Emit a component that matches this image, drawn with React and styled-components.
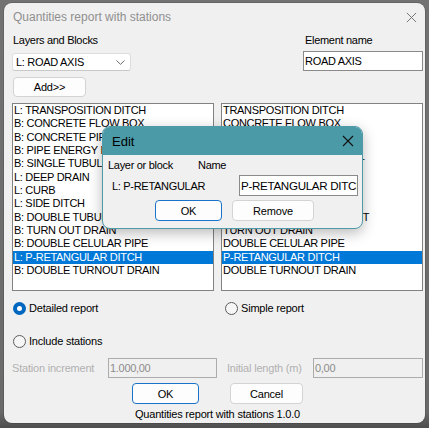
import React from 'react';
import styled, { createGlobalStyle } from 'styled-components';

const Global = createGlobalStyle`
  html, body { margin: 0; padding: 0; width: 429px; height: 428px; overflow: hidden; background: #6f6f6f; }
  body { font-family: "Liberation Sans", Arial, sans-serif; }
  * { box-sizing: border-box; }
`;

const Desktop = styled.div`
  width: 429px;
  height: 428px;
  padding: 3px 0 0 4px;
  background: linear-gradient(#727272, #6a6a6a 96%, #4e4e4e);
`;

const Window = styled.div`
  position: relative;
  width: 421px;
  height: 420px;
  background: #f0f0f0;
  border-radius: 8px;
  box-shadow: 0 0 0 1px rgba(0, 0, 0, 0.12);
  display: flex;
  flex-direction: column;
  padding: 0 2px 0 8px;
  font-size: 11px;
  letter-spacing: -0.3px;
  color: #000;
`;

const TitleBar = styled.div`
  height: 28px;
  display: flex;
  align-items: center;
  justify-content: space-between;
`;

const Title = styled.div`
  padding-left: 1px;
  font-size: 12px;
  letter-spacing: 0;
  color: #8f8f8f;
`;

const CloseBtn = styled.div`
  width: 24px;
  height: 24px;
  display: flex;
  align-items: center;
  justify-content: center;
`;

const TopArea = styled.div`
  display: flex;
  justify-content: space-between;
  align-items: flex-start;
  margin-top: 3px;
`;

const Column = styled.div`
  display: flex;
  flex-direction: column;
  align-items: flex-start;
  width: ${p => p.$w}px;
`;

const Label = styled.div`
  height: 13px;
  line-height: 13px;
  padding-left: ${p => p.$indent || 0}px;
  color: ${p => (p.$disabled ? '#b2b2b2' : '#000')};
  white-space: nowrap;
`;

const Combo = styled.div`
  margin-top: 6px;
  width: 119px;
  height: 18px;
  background: #fff;
  border: 1px solid #dedede;
  border-bottom-color: #c8c8c8;
  border-radius: 3px;
  display: flex;
  align-items: center;
  justify-content: space-between;
  padding: 0 5px 0 3px;
`;

const Button = styled.div`
  width: ${p => p.$w}px;
  height: ${p => p.$h || 21}px;
  margin-top: ${p => p.$mt || 0}px;
  margin-left: ${p => p.$ml || 0}px;
  background: #fdfdfd;
  border: 1px solid ${p => (p.$primary ? '#1a73c8' : '#d3d3d3')};
  border-radius: 4px;
  display: flex;
  align-items: center;
  justify-content: center;
  letter-spacing: -0.2px;
`;

const TextBox = styled.div`
  margin-top: ${p => p.$mt || 0}px;
  width: ${p => p.$w}px;
  height: ${p => p.$h || 20}px;
  font-size: ${p => p.$fs || 11}px;
  background: ${p => (p.$disabled ? '#f0f0f0' : '#fff')};
  border: 1px solid ${p => (p.$disabled ? '#acacac' : '#8a8a8a')};
  color: ${p => (p.$disabled ? '#8c8c8c' : '#000')};
  padding: 0 1px;
  display: flex;
  align-items: center;
  overflow: hidden;
  white-space: nowrap;
  flex-shrink: 0;
`;

const Lists = styled.div`
  margin-top: 6px;
  display: grid;
  grid-template-columns: 202px 202px;
  column-gap: 7px;
`;

const ListBox = styled.div`
  height: 188px;
  background: #fff;
  border: 1px solid #828282;
  overflow: hidden;
`;

const ListItem = styled.div`
  height: 13.333px;
  line-height: 13.333px;
  padding-left: 1px;
  white-space: nowrap;
  background: ${p => (p.$sel ? '#0078d7' : 'transparent')};
  color: ${p => (p.$sel ? '#fff' : '#000')};
`;

const RadioRow = styled.div`
  margin-top: ${p => p.$mt}px;
  display: grid;
  grid-template-columns: 202px 202px;
  column-gap: 7px;
  height: 14px;
`;

const Radio = styled.label`
  display: flex;
  align-items: center;
  gap: 3px;
  padding-left: ${p => p.$indent}px;
  letter-spacing: -0.2px;
`;

const RadioDot = styled.span`
  width: 13px;
  height: 13px;
  border-radius: 50%;
  flex-shrink: 0;
  border: ${p => (p.$on ? '4px solid #0067c0' : '1px solid #5c5c5c')};
  background: ${p => (p.$on ? '#fff' : '#f6f6f6')};
`;

const StationRow = styled.div`
  margin-top: 10px;
  display: flex;
  align-items: center;
  height: 20px;
`;

const StationLabel = styled.div`
  width: ${p => p.$w}px;
  padding-left: ${p => p.$indent || 0}px;
  color: #b0b0b0;
  white-space: nowrap;
  letter-spacing: -0.2px;
`;

const ButtonRow = styled.div`
  margin-top: 5px;
  display: flex;
  justify-content: center;
  gap: 31px;
`;

const Footer = styled.div`
  margin-top: 4px;
  height: 13px;
  line-height: 13px;
  text-align: center;
  letter-spacing: -0.2px;
`;

/* Edit modal */
const Modal = styled.div`
  position: absolute;
  left: 98px;
  top: 123px;
  width: 261px;
  height: 103px;
  border: 1px solid #4f9aa6;
  border-radius: 8px;
  overflow: hidden;
  background: #f0f0f0;
  box-shadow: 0 4px 14px rgba(0, 0, 0, 0.28);
  display: flex;
  flex-direction: column;
`;

const ModalTitleBar = styled.div`
  height: 28px;
  background: #4a9aa8;
  display: flex;
  align-items: center;
  justify-content: space-between;
  padding: 0 8px 0 9px;
`;

const ModalTitle = styled.div`
  font-size: 13px;
  letter-spacing: 0;
  color: #000;
`;

const ModalBody = styled.div`
  padding: 4px 5px 0 5px;
  display: flex;
  flex-direction: column;
`;

const ModalRow = styled.div`
  display: flex;
  align-items: center;
  margin-top: ${p => p.$mt || 0}px;
  padding-left: ${p => p.$pl || 0}px;
  gap: ${p => p.$gap || 0}px;
`;

const Cell = styled.div`
  width: ${p => p.$w}px;
  padding-left: ${p => p.$indent || 0}px;
  white-space: nowrap;
  flex-shrink: 0;
`;

const Chevron = () => (
  <svg width="9" height="5" viewBox="0 0 9 5">
    <path d="M0.5 0.5 L4.5 4.3 L8.5 0.5" fill="none" stroke="#6a6a6a" strokeWidth="1" />
  </svg>
);

const XIcon = ({ size, color, w }) => (
  <svg width={size} height={size} viewBox="0 0 12 12">
    <path d="M1 1 L11 11 M11 1 L1 11" stroke={color} strokeWidth={w} fill="none" />
  </svg>
);

const items = [
  ['L', 'TRANSPOSITION DITCH'],
  ['B', 'CONCRETE FLOW BOX'],
  ['B', 'CONCRETE PIPE'],
  ['B', 'PIPE ENERGY DISSIPATOR'],
  ['B', 'SINGLE TUBULAR CULVERT'],
  ['L', 'DEEP DRAIN'],
  ['L', 'CURB'],
  ['L', 'SIDE DITCH'],
  ['B', 'DOUBLE TUBULAR CULVERT'],
  ['B', 'TURN OUT DRAIN'],
  ['B', 'DOUBLE CELULAR PIPE'],
  ['L', 'P-RETANGULAR DITCH'],
  ['B', 'DOUBLE TURNOUT DRAIN'],
];
const SELECTED = 11;

export default function App() {
  return (
    <>
      <Global />
      <Desktop>
        <Window>
          <TitleBar>
            <Title>Quantities report with stations</Title>
            <CloseBtn>
              <XIcon size={11} color="#6b6b6b" w={1} />
            </CloseBtn>
          </TitleBar>

          <TopArea>
            <Column $w={130}>
              <Label $indent={1}>Layers and Blocks</Label>
              <Combo>
                <span>L: ROAD AXIS</span>
                <Chevron />
              </Combo>
              <Button $w={73} $h={20} $mt={6} $ml={1}>Add&gt;&gt;</Button>
            </Column>
            <Column $w={120}>
              <Label $indent={2}>Element name</Label>
              <TextBox $w={120} $mt={4}>ROAD AXIS</TextBox>
            </Column>
          </TopArea>

          <Lists>
            <ListBox>
              {items.map(([k, n], i) => (
                <ListItem key={i} $sel={i === SELECTED}>{k}: {n}</ListItem>
              ))}
            </ListBox>
            <ListBox>
              {items.map(([, n], i) => (
                <ListItem key={i} $sel={i === SELECTED}>{n}</ListItem>
              ))}
            </ListBox>
          </Lists>

          <RadioRow $mt={10}>
            <Radio $indent={1}>
              <RadioDot $on />
              Detailed report
            </Radio>
            <Radio $indent={4}>
              <RadioDot />
              Simple report
            </Radio>
          </RadioRow>

          <RadioRow $mt={19}>
            <Radio $indent={1}>
              <RadioDot />
              Include stations
            </Radio>
          </RadioRow>

          <StationRow>
            <StationLabel $w={96}>Station increment</StationLabel>
            <TextBox $w={109} $disabled>1.000,00</TextBox>
            <StationLabel $w={96} $indent={10}>Initial length (m)</StationLabel>
            <TextBox $w={110} $disabled>0,00</TextBox>
          </StationRow>

          <ButtonRow>
            <Button $w={67} $primary>OK</Button>
            <Button $w={73}>Cancel</Button>
          </ButtonRow>

          <Footer>Quantities report with stations 1.0.0</Footer>

          <Modal>
            <ModalTitleBar>
              <ModalTitle>Edit</ModalTitle>
              <XIcon size={12} color="#111" w={1.1} />
            </ModalTitleBar>
            <ModalBody>
              <ModalRow>
                <Cell $w={90}>Layer or block</Cell>
                <Cell $w={60}>Name</Cell>
              </ModalRow>
              <ModalRow $mt={4}>
                <Cell $w={131} $indent={4}>L: P-RETANGULAR</Cell>
                <TextBox $w={119} $h={21} $fs={11.6}>P-RETANGULAR DITCH</TextBox>
              </ModalRow>
              <ModalRow $mt={4} $pl={47} $gap={10}>
                <Button $w={67} $primary>OK</Button>
                <Button $w={82}>Remove</Button>
              </ModalRow>
            </ModalBody>
          </Modal>
        </Window>
      </Desktop>
    </>
  );
}
